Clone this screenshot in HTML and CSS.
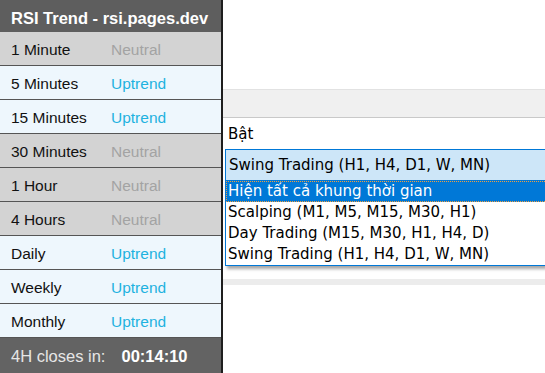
FILE: index.html
```html
<!DOCTYPE html>
<html lang="vi">
<head>
  <meta charset="UTF-8">
  <meta name="viewport" content="width=device-width, initial-scale=1.0">
  <title>RSI Trend</title>
  <link rel="stylesheet" href="styles.css">
</head>
<body>
  <!-- RSI panel -->
  <div class="panel">
    <div class="panel-head">RSI Trend - rsi.pages.dev</div>
    <div class="row neutral"><span class="tf">1 Minute</span><span class="state">Neutral</span></div>
    <div class="row up"><span class="tf">5 Minutes</span><span class="state">Uptrend</span></div>
    <div class="row up"><span class="tf">15 Minutes</span><span class="state">Uptrend</span></div>
    <div class="row neutral"><span class="tf">30 Minutes</span><span class="state">Neutral</span></div>
    <div class="row neutral"><span class="tf">1 Hour</span><span class="state">Neutral</span></div>
    <div class="row neutral"><span class="tf">4 Hours</span><span class="state">Neutral</span></div>
    <div class="row up"><span class="tf">Daily</span><span class="state">Uptrend</span></div>
    <div class="row up"><span class="tf">Weekly</span><span class="state">Uptrend</span></div>
    <div class="row up"><span class="tf">Monthly</span><span class="state">Uptrend</span></div>
    <div class="panel-foot"><span>4H closes in:</span><span class="timer">00:14:10</span></div>
  </div>

  <!-- Settings area -->
  <div class="settings">
    <div class="blank"></div>
    <div class="band"></div>
    <div class="content">
      <div class="value">Bật</div>
      <div class="combo">
        <div class="combo-field">Swing Trading (H1, H4, D1, W, MN)</div>
        <ul class="combo-list">
          <li class="active">Hiện tất cả khung thời gian</li>
          <li>Scalping (M1, M5, M15, M30, H1)</li>
          <li>Day Trading (M15, M30, H1, H4, D)</li>
          <li>Swing Trading (H1, H4, D1, W, MN)</li>
        </ul>
      </div>
    </div>
    <div class="band thin"></div>
  </div>
</body>
</html>
```

FILE: styles.css
```css
body {
  margin: 0;
  display: flex;
  height: 373px;
  overflow: hidden;
  background: #fff;
  font-family: 'Liberation Sans', Arial, sans-serif;
}

/* RSI panel */
.panel {
  width: 221px;
  flex-shrink: 0;
  border-right: 2px solid #1e1e1e;
  display: flex;
  flex-direction: column;
  font-size: 15.5px;
}

.panel-head {
  height: 32px;
  line-height: 36px;
  padding-left: 11px;
  background: #5e5e5e;
  color: #fff;
  font-size: 16.5px;
  font-weight: bold;
}

.row {
  display: flex;
  align-items: center;
  height: 31px;
  padding: 2px 0 0 11px;
  border-bottom: 1px solid #555;
  color: #111;
}

.row .tf {
  width: 100px;
}

.row.neutral {
  background: #d3d3d3;
}

.row.neutral .state {
  color: #a3a3a3;
}

.row.up {
  background: #eef7fd;
}

.row.up .state {
  color: #1eb2e0;
}

.panel-foot {
  flex: 1;
  display: flex;
  align-items: center;
  padding: 2px 0 0 11px;
  background: #636363;
  color: #e6e6e6;
  font-size: 16.5px;
}

.panel-foot .timer {
  margin-left: 16px;
  color: #fff;
  font-weight: bold;
}

/* Settings */
.settings {
  flex: 1;
  display: flex;
  flex-direction: column;
  font-family: 'DejaVu Sans', sans-serif;
  font-size: 15px;
  color: #000;
}

.blank {
  height: 89px;
}

.band {
  height: 27px;
  background: #f0f0f0;
  border-top: 1px solid #e2e2e2;
  border-bottom: 1px solid #c9c9c9;
}

.band.thin {
  height: 6px;
  border: none;
  background: #ececec;
}

.content {
  height: 161px;
}

.value {
  height: 31px;
  line-height: 32px;
  padding-left: 5px;
}

.combo {
  position: relative;
  margin-left: 2px;
}

.combo-field {
  height: 30px;
  line-height: 30px;
  padding-left: 3px;
  background: #cde6f8;
  border: 1px solid #0078d7;
  border-right: none;
}

.combo-list {
  position: absolute;
  top: 100%;
  left: 0;
  right: 0;
  margin: 0;
  padding: 0;
  list-style: none;
  background: #fff;
  border: 1px solid #0078d7;
  border-top: none;
  border-right: none;
  box-shadow: 2px 3px 3px rgba(0, 0, 0, 0.35);
}

.combo-list li {
  height: 21px;
  line-height: 21px;
  padding-left: 2px;
  white-space: nowrap;
}

.combo-list li.active {
  height: 19px;
  line-height: 19px;
  padding-left: 1px;
  background: #0078d7;
  color: #fff;
  border: 1px dotted #f0a040;
  border-right: none;
}
```
